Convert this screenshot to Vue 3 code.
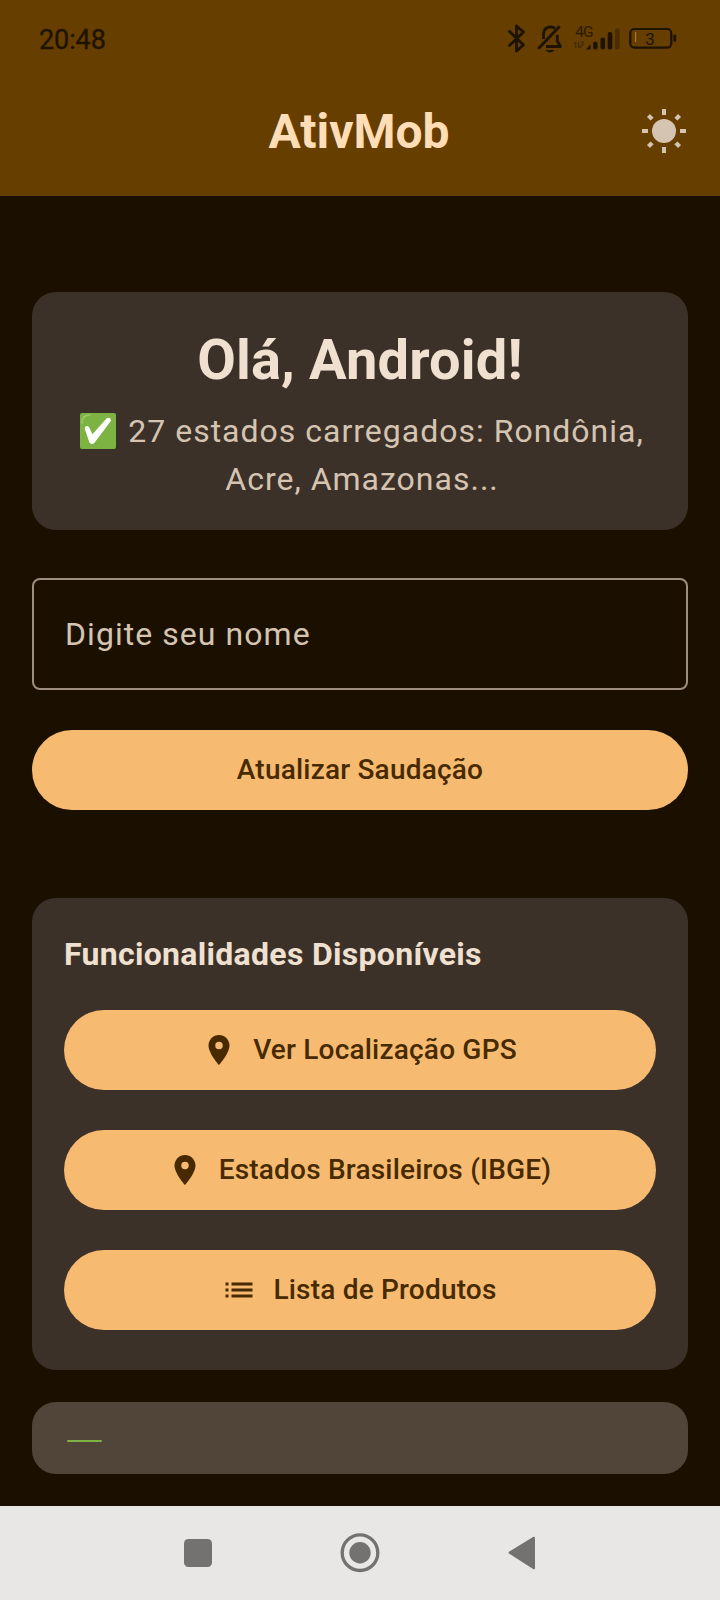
<script setup>
const features = [
  { label: 'Ver Localização GPS', icon: 'pin' },
  { label: 'Estados Brasileiros (IBGE)', icon: 'pin' },
  { label: 'Lista de Produtos', icon: 'list' },
]
</script>

<template>
  <div class="screen">
    <header class="top">
      <div class="status">
        <span class="clock">20:48</span>
        <svg class="status-icons" width="176" height="32" viewBox="504 23 176 32" fill="none" stroke="#1e1200">
          <path d="M509.5 31.5 L523.5 45 L516.5 51 V26 L523.5 32 L509.5 45.5" stroke-width="2.8" stroke-linejoin="round" stroke-linecap="round" />
          <g stroke-width="2.8" stroke-linecap="round" stroke-linejoin="round">
            <path d="M539 48 L559 27" />
            <path d="M543.5 39 V34 C543.5 29 547 27 550.5 27 C552.5 27 554 27.6 555 28.6" stroke-linecap="butt" />
            <path d="M557.3 35 V41 L560.5 46.5 H546" stroke-linecap="butt" />
          </g>
          <path d="M545.5 50 H554.5 Q553 52.4 550 52.4 Q547 52.4 545.5 50Z" fill="#1e1200" stroke="none" />
          <text x="575.2" y="37" class="net">4G</text>
          <g stroke="#432a04" stroke-width="1.2">
            <path d="M575.7 42 V48 M573.8 44 L575.7 42 M578.5 42 V48 M578.5 48 L580 46 M581 42.2 H583 V45 H581 V48" />
          </g>
          <path d="M586 49.5 L590.5 44.5 V49.5Z" fill="#1e1200" stroke="none" />
          <g stroke-width="4.6" stroke-linecap="round">
            <path d="M595.4 43.8 V47.3 M602.8 39.8 V47.3 M610 34.3 V47.3" />
            <path d="M617.3 30.5 V47.3" stroke="#4a2d03" />
          </g>
          <rect x="630.3" y="29" width="41" height="18.6" rx="4" stroke-width="2.2" />
          <path d="M635.6 32 V42" stroke="#b07520" stroke-width="1.2" />
          <path d="M674.8 36 V40.5" stroke-width="2.8" stroke-linecap="round" />
          <text x="645.2" y="44.8" class="level">3</text>
        </svg>
      </div>
      <div class="appbar">
        <span class="side"></span>
        <h1>AtivMob</h1>
        <span class="side">
          <svg width="48" height="48" viewBox="-24 -23 48 48" fill="#d5c4b1">
            <circle r="12" />
            <g v-for="a in [0, 90, 180, 270]" :key="a" :transform="`rotate(${a})`">
              <rect x="-2" y="-22" width="4" height="6" />
              <rect x="-2.1" y="-22" width="4.2" height="5.2" transform="rotate(45)" />
            </g>
          </svg>
        </span>
      </div>
    </header>

    <main>
      <section class="card hello">
        <h2>Olá, Android!</h2>
        <p>
          <svg class="check" width="36" height="36" viewBox="0 0 36 36">
            <rect width="36" height="36" rx="2" fill="#7cb342" />
            <path d="M2 10 Q2 2 10 2" fill="none" stroke="#9ccc65" stroke-width="1.6" stroke-linecap="round" />
            <path d="M4.6 15.5 Q6 11.5 9 14 L12.5 21.2 L26.5 5.6 Q30 3.2 31.2 7.4 L14.5 29.8 Q11.5 32.4 9.4 29.4Z" fill="#fff" />
          </svg><span>27 estados carregados: Rondônia,</span><br />Acre, Amazonas...
        </p>
      </section>

      <div class="field">Digite seu nome</div>
      <button class="btn">Atualizar Saudação</button>

      <section class="card features">
        <h3>Funcionalidades Disponíveis</h3>
        <button v-for="f in features" :key="f.label" class="btn">
          <svg width="36" height="36" viewBox="0 0 24 24" fill="#472a00">
            <path v-if="f.icon === 'pin'" d="M12 2C8.13 2 5 5.13 5 9c0 5.25 7 13 7 13s7-7.75 7-13c0-3.87-3.13-7-7-7zm0 9.5a2.5 2.5 0 1 1 0-5 2.5 2.5 0 0 1 0 5z" />
            <path v-else d="M3 13h2v-2H3v2zm0 4h2v-2H3v2zm0-8h2V7H3v2zm4 4h14v-2H7v2zm0 4h14v-2H7v2zM7 7v2h14V7H7z" />
          </svg>
          <span>{{ f.label }}</span>
        </button>
      </section>

      <section class="card peek"><i></i></section>
    </main>

    <nav>
      <svg width="720" height="94" viewBox="0 1506 720 94" fill="#737270">
        <rect x="184" y="1539" width="28" height="28" rx="4.5" />
        <circle cx="360" cy="1552.7" r="17.8" fill="none" stroke="#737270" stroke-width="3.3" />
        <circle cx="360" cy="1552.7" r="10.7" />
        <path d="M509.5 1552.7 L534 1537.7 V1568.3Z" stroke="#737270" stroke-width="2" stroke-linejoin="round" />
      </svg>
    </nav>
  </div>
</template>

<style>
body { margin: 0; background: #1b1000; }
</style>

<style scoped>
.screen {
  width: 720px;
  height: 1600px;
  box-sizing: border-box;
  display: flex;
  flex-direction: column;
  background: #1b1000;
  font-family: Roboto, "Noto Sans", sans-serif;
  overflow: hidden;
}
h1, h2, h3, p { margin: 0; }
.top { height: 196px; background: #653e00; flex: none; }
.status {
  height: 68px;
  padding: 9px 40px 0 39px;
  display: flex;
  justify-content: space-between;
  align-items: center;
  box-sizing: border-box;
}
.clock { font-size: 27px; line-height: 32px; color: #1e1200; letter-spacing: -0.1px; padding-top: 2px; -webkit-text-stroke: 0.3px #1e1200; }
.status-icons { display: block; }
.net { font: 15.5px Roboto, sans-serif; letter-spacing: -0.8px; fill: #2c1b02; stroke: none; }
.level { font: 400 17px Roboto, sans-serif; fill: #1e1200; stroke: none; }
.appbar {
  height: 128px;
  padding: 0 33px 0 31px;
  display: flex;
  align-items: center;
  justify-content: space-between;
}
.side { width: 48px; height: 48px; }
.side svg { display: block; margin-left: 1px; }
h1 { font-size: 48px; line-height: 56px; font-weight: 700; color: #ffddb7; }
main { flex: 1; padding: 96px 32px 0; display: flex; flex-direction: column; }
.card { background: #3c3129; border-radius: 24px; box-sizing: border-box; }
.hello { height: 238px; padding: 32px; text-align: center; }
h2 { font-size: 56px; line-height: 72px; font-weight: 700; letter-spacing: 0.15px; color: #efe0cf; }
.hello p {
  margin: 11px -2px 0 2px;
  font-size: 32px;
  line-height: 48px;
  letter-spacing: 1px;
  color: #d5c4b1;
  white-space: nowrap;
}
.check { vertical-align: -7px; margin-right: 12px; }
.field {
  margin-top: 48px;
  height: 112px;
  box-sizing: border-box;
  border: 2px solid #9d8e7d;
  border-radius: 8px;
  padding: 0 31px;
  display: flex;
  align-items: center;
  font-size: 32px;
  letter-spacing: 1.05px;
  color: #d5c4b1;
}
.btn {
  height: 80px;
  width: 100%;
  flex: none;
  border: 0;
  border-radius: 40px;
  background: #f6bb70;
  color: #472a00;
  display: flex;
  align-items: center;
  justify-content: center;
  gap: 16px;
  font: 500 28px/40px Roboto, sans-serif;
  letter-spacing: 0.2px;
  padding: 0;
}
.field + .btn { margin-top: 40px; }
.features .btn { padding-right: 2px; }
.features {
  margin-top: 88px;
  height: 472px;
  padding: 32px;
  display: flex;
  flex-direction: column;
  gap: 40px;
}
h3 {
  font-size: 32px;
  line-height: 48px;
  margin-bottom: -8px;
  font-weight: 700;
  letter-spacing: 0.3px;
  color: #efe0cf;
}
.peek { margin-top: 32px; height: 72px; padding: 38px 35px 0; background: #504538; }
.peek i { display: block; width: 35px; height: 2px; border-radius: 1px; background: #7cb342; }
nav { height: 94px; flex: none; background: #e8e7e5; }
nav svg { display: block; }
</style>
